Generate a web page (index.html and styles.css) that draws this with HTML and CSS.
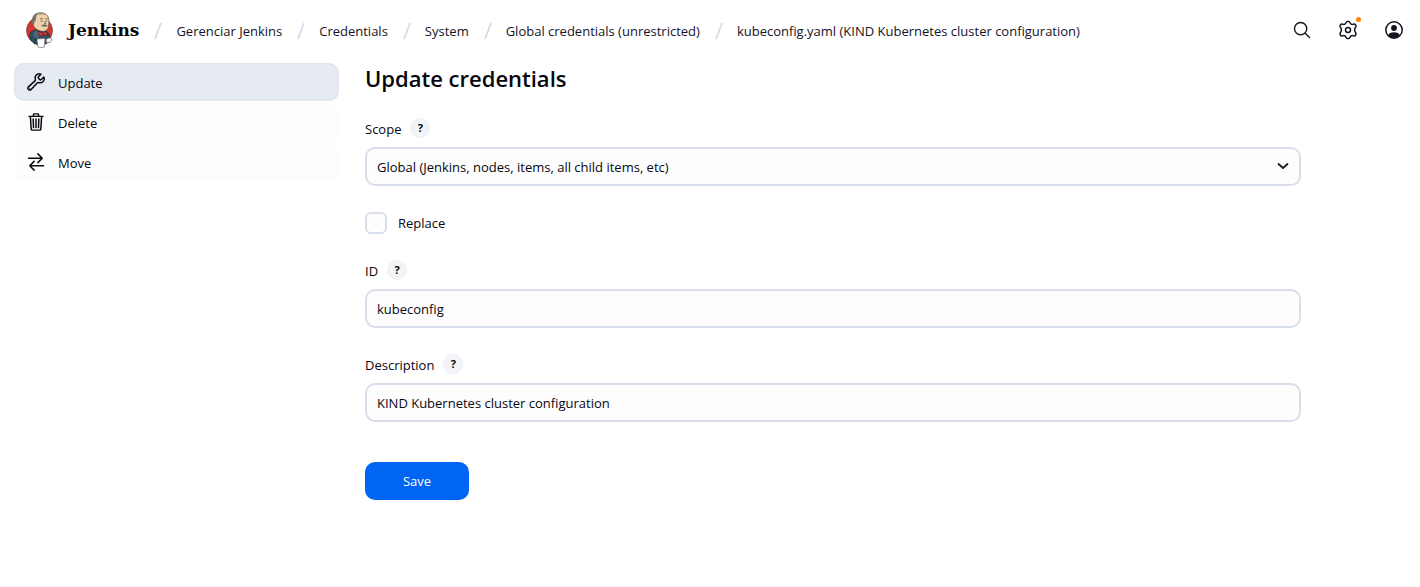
FILE: index.html
```html
<!DOCTYPE html>
<html lang="pt-BR">
<head>
<meta charset="utf-8">
<meta name="viewport" content="width=device-width, initial-scale=1">
<title>Update credentials - Jenkins</title>
<link rel="stylesheet" href="styles.css">
</head>
<body>
<header class="page-header">
  <a class="brand" href="#">
    <svg class="brand-logo" viewBox="0 0 26 35" aria-hidden="true">
      <ellipse cx="13" cy="18" rx="12.600" ry="13" fill="#d33833" stroke="#5a2a2a" stroke-width=".6"/>
      <path d="M4.500 19.500 10 17l9 1 3 3 1.500 6-4 4H8.500l-3-2.500c-2-2-2.500-6-1-9z" fill="#335061" stroke="#1b2c36" stroke-width=".7"/>
      <path d="M6.500 12C5.300 7.500 6.500 3 10 1.500 14.500-.3 19.500.8 21.500 5c1 2.500.7 6 .3 8.800-.5 3-2 4.700-5 5C13 19 8.500 17 6.500 12z" fill="#f0d2ae" stroke="#5b4a42" stroke-width=".7"/>
      <path d="M6.500 12C5.300 7.500 6.500 3 10 1.500c1.200-.5 2.200-.7 3.300-.8C10.800 1.900 9.800 3.600 9.600 5.800c-.1 1.500.1 2.200-.8 3-.8.700-.9 1.700-1.300 3.900z" fill="#77706b"/>
      <path d="M10 1.500C14.500-.3 18.800.8 20.800 3.800c-3.200-1.600-7-1.800-10.500-.6z" fill="#a3968a"/>
      <path d="M13.500 7c.9-.8 2.200-.7 3 0M18.600 6.800c.8-.6 1.800-.5 2.400 0M14.200 8.800h1.800M19 8.700h1.400M18 9l.9 2.500-1.400.3" fill="none" stroke="#4b3e38" stroke-width=".8"/>
      <path d="M14.500 13.300c1.700-1.400 3.500-1.200 6.500-.4l-1 1.300c-1.700.5-3.900.2-5.500-.9z" fill="#77665e"/>
      <path d="M9 17.500 13 21l-2 6-4-5z" fill="#48687b"/>
      <path d="m12 18.500 4 1.800 3.800-1.300.7 4-4-1.200L12.800 24z" fill="#d33833" stroke="#6b1c1c" stroke-width=".7"/>
      <path d="M19.500 27c1-1.500 3-2 5-1.600.8 1.500.3 3.200-1.200 4.200l-3.500.4z" fill="#f4f4f4" stroke="#777" stroke-width=".7"/>
      <path d="m10.500 26.300 7.800-.6-.5 8.300c-2 .8-4.300.8-6.300 0z" fill="#fff" stroke="#6a6f74" stroke-width=".7"/>
      <path d="M8.500 29c0-2 .8-3 2-2.800M7.500 30l3.500 1.500" fill="none" stroke="#222e37" stroke-width="1"/>
    </svg>
    <span class="brand-name">Jenkins</span>
  </a>
  <nav class="breadcrumbs" aria-label="Breadcrumb">
    <ol class="breadcrumb-list">
      <li class="breadcrumb"><svg class="slash" viewBox="0 0 8 18" aria-hidden="true"><path d="M7 1 1 17"/></svg><a href="#">Gerenciar Jenkins</a></li>
      <li class="breadcrumb"><svg class="slash" viewBox="0 0 8 18" aria-hidden="true"><path d="M7 1 1 17"/></svg><a href="#">Credentials</a></li>
      <li class="breadcrumb"><svg class="slash" viewBox="0 0 8 18" aria-hidden="true"><path d="M7 1 1 17"/></svg><a href="#">System</a></li>
      <li class="breadcrumb"><svg class="slash" viewBox="0 0 8 18" aria-hidden="true"><path d="M7 1 1 17"/></svg><a href="#">Global credentials (unrestricted)</a></li>
      <li class="breadcrumb"><svg class="slash" viewBox="0 0 8 18" aria-hidden="true"><path d="M7 1 1 17"/></svg><a href="#">kubeconfig.yaml (KIND Kubernetes cluster configuration)</a></li>
    </ol>
  </nav>
  <div class="header-actions">
    <button class="icon-button" type="button" aria-label="Search">
      <svg class="icon" viewBox="0 0 512 512" aria-hidden="true"><path d="M221 64a157 157 0 1 0 157 157A157 157 0 0 0 221 64zM338 338l110 110" fill="none" stroke="currentColor" stroke-width="36" stroke-linecap="round"/></svg>
    </button>
    <a class="icon-button" href="#" aria-label="Manage Jenkins">
      <svg class="icon" viewBox="0 0 20 20" aria-hidden="true" fill="none" stroke="currentColor" stroke-width="1.500" stroke-linejoin="round"><circle cx="10" cy="10" r="2.500"/><path d="M8 2.600Q8.300 1.500 9.300 1.500h1.400q1 0 1.300 1.100.3 1.200 1.400 1.600 1 .5 2.100-.1 1.100-.5 1.700.4l.7 1.200q.5.900-.3 1.700-1 .9-1 2.600t1 2.600q.8.800.3 1.700l-.7 1.200q-.6.900-1.700.4-1.100-.6-2.100-.1-1.100.4-1.400 1.600-.3 1.100-1.300 1.100H9.300q-1 0-1.300-1.100-.3-1.200-1.400-1.600-1-.5-2.100.1-1.100.5-1.700-.4l-.7-1.200q-.5-.9.300-1.700 1-.9 1-2.600t-1-2.600q-.8-.8-.3-1.700l.7-1.200q.6-.9 1.700-.4 1.100.6 2.100.1 1.100-.4 1.400-1.600z"/></svg>
      <span class="notice-dot"></span>
    </a>
    <a class="icon-button" href="#" aria-label="User">
      <svg class="icon" viewBox="0 0 20 20" aria-hidden="true"><circle cx="10" cy="10" r="8.200" fill="none" stroke="currentColor" stroke-width="1.500"/><circle cx="10" cy="8" r="2.900" fill="currentColor"/><path d="M4 15.300c1.200-2.400 3.600-3 6-3s4.800.6 6 3a8.200 8.200 0 0 1-12 0z" fill="currentColor"/></svg>
    </a>
  </div>
</header>
<div class="page-body">
  <nav class="side-panel" aria-label="Tasks">
    <a class="task task-active" href="#" aria-current="page">
      <svg class="icon" viewBox="0 0 512 512" aria-hidden="true"><path d="M393.870 190a32.100 32.100 0 0 1-45.250 0l-26.570-26.570a32.090 32.090 0 0 1 0-45.260L382.190 58a1 1 0 0 0-.3-1.640c-38.820-16.640-89.150-8.160-121.110 23.570-30.580 30.350-32.320 76-21.120 115.840a31.930 31.930 0 0 1-9.060 32.080L64 380a48.170 48.170 0 1 0 68 68l153.860-167a31.930 31.930 0 0 1 31.600-9.130c39.540 10.590 84.540 8.600 114.720-21.190 32.490-32 39.500-88.560 23.750-120.930a1 1 0 0 0-1.600-.26z" fill="none" stroke="currentColor" stroke-width="38" stroke-linecap="round"/><circle cx="96" cy="416" r="16" fill="currentColor"/></svg>
      <span>Update</span>
    </a>
    <a class="task" href="#">
      <svg class="icon" viewBox="0 0 512 512" aria-hidden="true" fill="none" stroke="currentColor" stroke-width="38" stroke-linecap="round" stroke-linejoin="round"><path d="m112 112 20 320c.95 18.490 14.400 32 32 32h184c17.670 0 30.870-13.510 32-32l20-320M80 112h352M192 112V72a23.930 23.930 0 0 1 24-24h80a23.930 23.930 0 0 1 24 24v40M256 176v224M184 176l8 224M328 176l-8 224"/></svg>
      <span>Delete</span>
    </a>
    <a class="task" href="#">
      <svg class="icon" viewBox="0 0 512 512" aria-hidden="true" fill="none" stroke="currentColor" stroke-width="38" stroke-linecap="round" stroke-linejoin="round"><path d="m304 48 112 112-112 112M398 160H64M208 464 96 352l112-112M114 352h334"/></svg>
      <span>Move</span>
    </a>
  </nav>
  <main class="content">
    <h1 class="page-title">Update credentials</h1>
    <form class="form">
      <div class="field">
        <div class="field-head"><label for="scope">Scope</label><button class="help" type="button" aria-label="Help for Scope">?</button></div>
        <div class="select-wrap">
          <select class="control" id="scope"><option>Global (Jenkins, nodes, items, all child items, etc)</option></select>
          <svg class="chevron" viewBox="0 0 12 8" aria-hidden="true"><path d="m1.500 2 4.500 4 4.500-4"/></svg>
        </div>
      </div>
      <div class="check-row"><input class="checkbox" type="checkbox" id="replace"><label for="replace">Replace</label></div>
      <div class="field">
        <div class="field-head"><label for="cred-id">ID</label><button class="help" type="button" aria-label="Help for ID">?</button></div>
        <input class="control" type="text" id="cred-id" value="kubeconfig">
      </div>
      <div class="field">
        <div class="field-head"><label for="description">Description</label><button class="help" type="button" aria-label="Help for Description">?</button></div>
        <input class="control" type="text" id="description" value="KIND Kubernetes cluster configuration">
      </div>
      <button class="save" type="button">Save</button>
    </form>
  </main>
</div>
</body>
</html>
```
FILE: styles.css
```css
*, *::before, *::after { box-sizing: border-box; }

body {
  margin: 0;
  background: #fff;
  color: #07070f;
  font-family: "Open Sans", "Noto Sans", sans-serif;
  font-size: 13px;
  line-height: 20px;
}

a { color: inherit; text-decoration: none; }

button, input, select { font: inherit; color: inherit; }

.icon { width: 20px; height: 20px; flex: none; }

.page-header {
  display: flex;
  align-items: center;
  min-height: 60px;
  padding: 0 8px 0 26px;
  color: #14141f;
}

.brand { display: flex; align-items: center; gap: 15px; }
.brand-logo { width: 27px; height: 36px; }
.brand-name {
  font-family: "DejaVu Serif", serif;
  font-size: 17px;
  font-weight: 700;
  line-height: 28px;
  color: #07070f;
}

.breadcrumbs { flex: 1; min-width: 0; padding: 2px 0 0 15px; }
.breadcrumb-list {
  display: flex;
  flex-wrap: wrap;
  gap: 15px;
  margin: 0;
  padding: 0;
  list-style: none;
}
.breadcrumb { display: flex; align-items: center; gap: 14px; }
.slash {
  width: 8px;
  height: 18px;
  fill: none;
  stroke: #d4deea;
  stroke-width: 2;
}

.header-actions { display: flex; gap: 10px; }
.icon-button {
  position: relative;
  display: flex;
  align-items: center;
  justify-content: center;
  width: 36px;
  height: 36px;
  padding: 0;
  border: 0;
  border-radius: 10px;
  background: none;
}
.notice-dot {
  position: absolute;
  top: 5px;
  right: 5px;
  width: 5px;
  height: 5px;
  border-radius: 50%;
  background: #fe820a;
}

.page-body {
  display: grid;
  grid-template-columns: 325px minmax(0, 1fr);
  gap: 26px;
  padding: 3px 14px 40px;
}

.side-panel { display: flex; flex-direction: column; gap: 2px; }
.task {
  display: flex;
  align-items: center;
  gap: 12px;
  height: 38px;
  padding: 0 12px;
  border-radius: 10px;
  background: #fdfdfd;
}
.task span { padding-top: 2px; }
.task-active { background: #e6ebf2; box-shadow: inset 0 0 0 2px #e1e7ef; }

.content { max-width: 936px; }
.page-title {
  margin: 0 0 25px;
  font-size: 22px;
  font-weight: 600;
  line-height: 30px;
}

.form { display: flex; flex-direction: column; gap: 26px; }
.field { display: flex; flex-direction: column; gap: 9px; }
.field-head { display: flex; align-items: center; gap: 9px; height: 20px; }
.field-head label { padding-top: 2px; }
.help {
  width: 20px;
  height: 20px;
  padding: 0;
  border: 1px solid #edf0f4;
  border-radius: 50%;
  background: #f2f5f8;
  font-size: 11px;
  font-weight: 700;
  line-height: 18px;
  text-align: center;
}

.control {
  width: 100%;
  height: 39px;
  margin: 0;
  padding: 0 10px;
  border: 2px solid #d9deeb;
  border-radius: 10px;
  background: #fdfdfd;
  appearance: none;
}
.select-wrap { position: relative; }
.chevron {
  position: absolute;
  top: 15px;
  right: 12px;
  width: 12px;
  height: 8px;
  fill: none;
  stroke: #14141f;
  stroke-width: 1.7;
  stroke-linecap: round;
  pointer-events: none;
}

.check-row { display: flex; align-items: center; gap: 11px; }
.checkbox {
  width: 22px;
  height: 22px;
  margin: 0;
  border: 2px solid #d9deeb;
  border-radius: 6px;
  background: #fdfdfd;
  appearance: none;
}
.checkbox:checked { background: #0065f2; }

.save {
  align-self: flex-start;
  min-width: 104px;
  height: 38px;
  margin-top: 14px;
  border: 0;
  border-radius: 10px;
  background: #0065f2;
  color: #fff;
}
```
